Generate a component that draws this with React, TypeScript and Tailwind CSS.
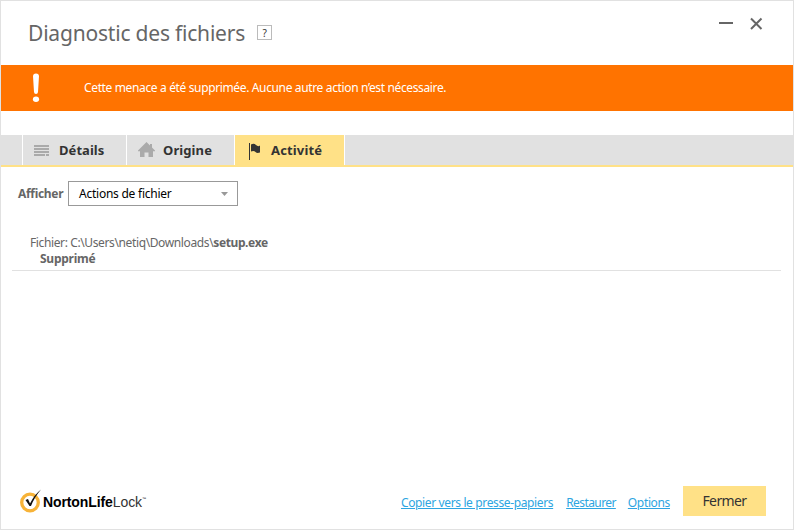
function Header() {
  return (
    <header className="flex h-16 shrink-0 items-start pl-[27px] pr-[30px]">
      <h1 className="mt-[18px] whitespace-nowrap text-[21px] leading-[28px] tracking-[-0.2px] text-[#666]">Diagnostic des fichiers</h1>
      <button className="ml-3 mt-6 flex h-[15px] w-[15px] items-center justify-center border border-[#bbb] text-[10px] leading-none text-[#333]">?</button>
      <div className="ml-auto mt-[15px] flex gap-4">
        <svg width="15" height="16" viewBox="0 0 15 16"><path d="M0 7h14" stroke="#666" strokeWidth="2" /></svg>
        <svg width="13" height="16" viewBox="0 0 13 16"><path d="M1 2.5 11.5 13M11.5 2.5 1 13" stroke="#666" strokeWidth="2" /></svg>
      </div>
    </header>
  );
}

function Banner() {
  return (
    <div className="flex h-[46px] shrink-0 items-center bg-[#ff7300] pl-[30px] text-white">
      <svg width="10" height="32" viewBox="0 0 10 32" fill="white">
        <path d="M2 4.500Q2 1.500 5 1.500t3 3L7 20Q6.800 22 5 22T3 20Z" />
        <ellipse cx="5" cy="27.300" rx="3.100" ry="2.700" />
      </svg>
      <p className="ml-[43px] whitespace-nowrap text-[12px] tracking-[-0.36px]">Cette menace a été supprimée. Aucune autre action n’est nécessaire.</p>
    </div>
  );
}

function Tabs() {
  return (
    <nav className="mt-6 flex h-8 shrink-0 border-b-2 border-[#ffe187] bg-[#e1e1e1] pl-[21px] text-[13px] font-bold text-[#333]">
      <div className="flex w-[104px] items-center border-l border-white pl-[11px] pt-[2px]">
        <svg width="16" height="12" viewBox="0 0 16 12" fill="#aaa"><path d="M0 0h15v2H0zM0 3h15v2H0zM0 6h15v2H0zM0 9h11v2H0zM12 9h3v2h-3z" /></svg>
        <span className="ml-[9px] tracking-[0.05px]">Détails</span>
      </div>
      <div className="flex w-[108px] items-center border-l border-white pl-[11px] pt-[2px]">
        <svg className="mb-[2px]" width="17" height="16" viewBox="0 0 17 16" fill="#aaa"><path d="M8.500 0 12 3.500V2h2v3.500L17 8.500v.7h-2V15h-4.500V10.500h-4V15H2V9.200H0v-.7Z" /></svg>
        <span className="ml-2 tracking-[0.1px]">Origine</span>
      </div>
      <div className="flex w-[111px] items-center border-x border-white bg-[#ffe187] pl-[14px] pt-[2px]">
        <svg width="13" height="17" viewBox="0 0 13 17" fill="#333"><path d="M0 0h1v17H0zM2 1.500Q5 0 7 2t4 .5v7Q8 10.500 6.500 9T2 8.500Z" /></svg>
        <span className="ml-[9px] tracking-[0.15px]">Activité</span>
      </div>
    </nav>
  );
}

function Logo() {
  return (
    <div className="flex h-7 items-center text-black">
      <svg width="23" height="26" viewBox="0 0 23 26" fill="none">
        <circle cx="10" cy="14.500" r="8.300" stroke="#f7b338" strokeWidth="3.300" />
        <path d="m5.500 12 2.500-1 2 4.500Q14.500 6.500 21 1.500 14.500 9 11 18H9.500Z" fill="#111" />
      </svg>
      <span className="mt-[2px] flex whitespace-nowrap font-['Liberation_Sans',sans-serif] text-[14px] leading-4">
        <b className="tracking-[-0.1px]">NortonLife</b>
        <span className="tracking-[-0.1px] text-[#333]">Lock</span>
        <span className="text-[4px] leading-[9px]">™</span>
      </span>
    </div>
  );
}

export default function App() {
  return (
    <main className="flex h-[530px] w-[794px] flex-col border border-[#e1e1e1] bg-white font-['Noto_Sans',sans-serif]">
      <Header />
      <Banner />
      <Tabs />
      <div className="mt-[14px] flex h-[25px] shrink-0 items-center pl-[17px] text-[12px]">
        <span className="w-[50px] whitespace-nowrap font-bold tracking-[-0.3px] text-[#666]">Afficher</span>
        <div className="flex h-[25px] w-[170px] items-center justify-between border border-[#999] pl-[10px] pr-[9px] text-black">
          <span className="tracking-[-0.24px]">Actions de fichier</span>
          <svg width="7" height="4" viewBox="0 0 7 4" fill="#999"><path d="M0 0h7L3.500 4Z" /></svg>
        </div>
      </div>
      <section className="ml-[11px] mr-3 mt-[29px] h-9 shrink-0 border-b border-[#e1e1e1] pl-[18px] text-[12px] leading-4 text-[#666]">
        <p className="whitespace-nowrap tracking-[-0.38px]">Fichier: C:\Users\netiq\Downloads\<b>setup.exe</b></p>
        <p className="pl-[10px] font-bold tracking-[-0.25px]">Supprimé</p>
      </section>
      <footer className="mb-[13px] mt-auto flex h-[30px] shrink-0 items-center pl-[19px] pr-[27px]">
        <Logo />
        <div className="ml-auto flex items-center whitespace-nowrap pt-1 text-[12px] text-[#2da5e1]">
          <a className="mr-[13px] tracking-[-0.37px] underline">Copier vers le presse-papiers</a>
          <a className="mr-3 tracking-[-0.58px] underline">Restaurer</a>
          <a className="mr-[13px] tracking-[-0.35px] underline">Options</a>
        </div>
        <button className="h-[30px] w-[83px] bg-[#ffe187] text-[14px] leading-5 tracking-[-0.6px] text-[#333]">Fermer</button>
      </footer>
    </main>
  );
}
